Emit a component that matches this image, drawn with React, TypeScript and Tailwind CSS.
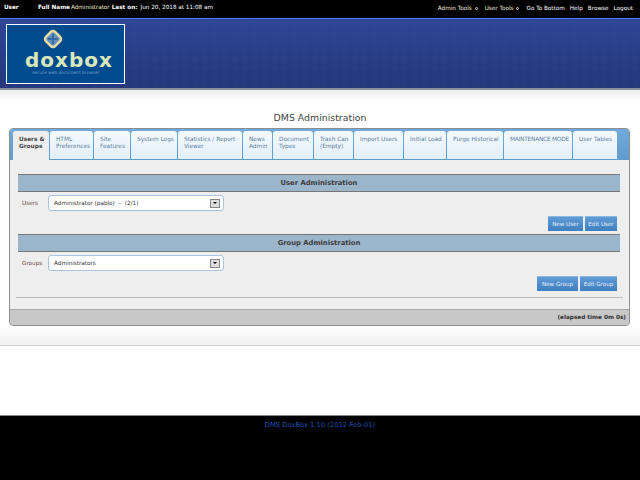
const font = "font-['DejaVu_Sans',Verdana,sans-serif]";

const tabs = [
  { label: "HTML Preferences", w: "w-[43px]" },
  { label: "Site Features", w: "w-[36px]" },
  { label: "System Logs", w: "w-[46px]" },
  { label: "Statistics / Report Viewer", w: "w-[64px]" },
  { label: "News Admin", w: "w-[29px]" },
  { label: "Document Types", w: "w-[40px]" },
  { label: "Trash Can (Empty)", w: "w-[39px]" },
  { label: "Import Users", w: "w-[49px]" },
  { label: "Initial Load", w: "w-[42px]" },
  { label: "Purge Historical", w: "w-[56px]" },
  { label: "MAINTENANCE MODE", w: "w-[68px] whitespace-nowrap tracking-[-0.2px]" },
  { label: "User Tables", w: "w-[44px]" },
];

function Logo() {
  return (
    <div className="w-[119px] h-[60px] ml-[6px] mt-[5px] border border-white bg-[#004b8d] flex flex-col overflow-hidden">
      <svg width="22" height="22" viewBox="0 0 22 22" className="mt-[3px] ml-[35px] shrink-0">
        <rect x="4.5" y="4.5" width="13" height="13" rx="3" transform="rotate(45 11 11)" fill="#5f8fc0" stroke="#e8dca0" strokeWidth="2.5" />
        <path d="M11 6v10M6 11h10" stroke="#2f639c" strokeWidth="1.5" />
      </svg>
      <div className="text-[20px] leading-[16px] mt-[2px] mb-[2px] ml-[18px] tracking-[1px] text-[#d9e8bb] font-bold">doxbox</div>
      <div className="text-[4.4px] leading-[6px] ml-[25px] text-[#6f98c4]">secure web document browser</div>
    </div>
  );
}

function Section({ title }: { title: string }) {
  return (
    <div className="h-[18px] pt-[1px] bg-[#9bb5cb] border-y border-[#777777] flex items-center justify-center text-[6.8px] font-bold text-[#3d3d3d]">
      {title}
    </div>
  );
}

function Select({ value }: { value: string }) {
  return (
    <div className="w-[176px] h-[16px] bg-white border border-[#a8c4de] rounded-[3px] flex items-center justify-between pl-[5px] pr-[3px]">
      <span className="text-[5.7px] text-[#333333] whitespace-pre">{value}</span>
      <span className="w-[10px] h-[9px] bg-[#dddddd] border border-[#888888] flex items-center justify-center">
        <span className="border-x-[2px] border-t-[2px] border-x-transparent border-t-black" />
      </span>
    </div>
  );
}

function Btn({ label, w }: { label: string; w: string }) {
  return (
    <div className={`${w} h-[15px] bg-gradient-to-b from-[#5f9bd6] to-[#3f7fc0] border-t border-[#8cb8e0] flex items-center justify-center text-[5.6px] text-[#e8eef5] whitespace-nowrap`}>
      {label}
    </div>
  );
}

export default function App() {
  return (
    <div className={`${font} w-[640px] h-[480px] bg-white flex flex-col overflow-hidden`}>
      <header className="h-[18px] bg-black flex items-center justify-between pl-[4px] pr-[7px] text-[5.7px] text-white">
        <div className="flex items-center pb-[3px]">
          <span className="font-bold w-[34px]">User</span>
          <span className="font-bold mr-[1px]">Full Name</span>
          <span className="text-[#f0e8c8] mr-[2px]">Administrator</span>
          <span className="font-bold mr-[3px]">Last on:</span>
          <span>Jun 20, 2018 at 11:08 am</span>
        </div>
        <div className="flex items-center pb-[1px]">
          <span className="text-[#f0ecd8]">Admin Tools</span>
          <span className="w-[3px] h-[3px] rounded-full border border-[#dddddd] ml-[3px] mr-[7px]" />
          <span className="text-[#f0ecd8]">User Tools</span>
          <span className="w-[3px] h-[3px] rounded-full border border-[#dddddd] ml-[3px] mr-[7px]" />
          <span className="mr-[5px]">Go To Bottom</span>
          <span className="mr-[5px]">Help</span>
          <span className="mr-[5px]">Browse</span>
          <span>Logout</span>
        </div>
      </header>

      <div className="h-[72px] border-t border-[#4a78e0] border-b-2 border-b-[#8f93a0] bg-gradient-to-b from-[#2d4696] to-[#25367a]">
        <div className="h-full bg-[radial-gradient(circle,rgba(255,255,255,0.015),transparent_70%)] bg-[size:10px_9px] overflow-hidden">
          <Logo />
        </div>
      </div>

      <div className="h-[38px] bg-gradient-to-b from-[#eeeeee] to-white to-[30%] flex items-end justify-center">
        <h1 className="text-[9.4px] leading-[14px] mb-[3px] text-[#444444]">DMS Administration</h1>
      </div>

      <main className="mx-[9px] w-[621px] h-[198px] border border-[#8e8e8e] rounded-[4px] bg-[#eeeeee] flex flex-col overflow-hidden">
        <nav className="h-[31px] pt-[2px] pl-[2px] flex gap-[1px] bg-gradient-to-b from-[#72aadb] to-[#5f9bcb] shrink-0">
          <div className="w-[37px] h-[29px] bg-[#eeeeee] rounded-t-[3px] border-l border-[#6ea4d4] pl-[6px] pr-[3px] pt-[5px] text-[5.8px] leading-[6.5px] font-bold text-[#444444]">
            Users &amp; Groups
          </div>
          {tabs.map((t) => (
            <div
              key={t.label}
              className={`${t.w} h-[28px] rounded-t-[3px] bg-gradient-to-b from-[#f4f9fd] to-[#e2effb] pl-[6px] pt-[5px] text-[5.8px] leading-[6.5px] text-[#5f7f9f] overflow-hidden`}
            >
              {t.label}
            </div>
          ))}
        </nav>

        <div className="pl-[8px] pr-[9px] pt-[14px] flex flex-col flex-1">
          <Section title="User Administration" />
          <div className="flex items-center h-[16px] mt-[3px]">
            <span className="w-[30px] pl-[4px] text-[5.7px] text-[#6a4a4a]">Users</span>
            <Select value="Administrator (pablo)  –  (2/1)" />
          </div>
          <div className="flex justify-end gap-[2px] mt-[5px] pr-[3px]">
            <Btn label="New User" w="w-[35px]" />
            <Btn label="Edit User" w="w-[32px]" />
          </div>
          <div className="mt-[3px]">
            <Section title="Group Administration" />
          </div>
          <div className="flex items-center h-[16px] mt-[3px]">
            <span className="w-[30px] pl-[4px] text-[5.7px] text-[#6a4a4a]">Groups</span>
            <Select value="Administrators" />
          </div>
          <div className="flex justify-end gap-[2px] mt-[5px] pr-[3px]">
            <Btn label="New Group" w="w-[41px]" />
            <Btn label="Edit Group" w="w-[37px]" />
          </div>
          <div className="border-t border-[#bbbbbb] mt-[6px] -ml-[2px] -mr-[3px]" />
        </div>

        <div className="h-[16px] bg-[#c8c8c8] border-t border-[#a8a8a8] flex items-center justify-end pr-[3px] text-[5.75px] font-bold text-[#333333] shrink-0">
          (elapsed time 0m 0s)
        </div>
      </main>

      <div className="h-[20px] bg-gradient-to-b from-white to-[#f0f0f0] border-b border-[#cccccc]" />
      <div className="h-[69px] bg-white" />

      <footer className="flex-1 bg-black border-t border-[#888888] flex justify-center pt-[5px]">
        <span className="text-[6.75px] leading-[9px] text-[#1f4fb0]">DMS DoxBox 1.10 (2012-Feb-01)</span>
      </footer>
    </div>
  );
}
